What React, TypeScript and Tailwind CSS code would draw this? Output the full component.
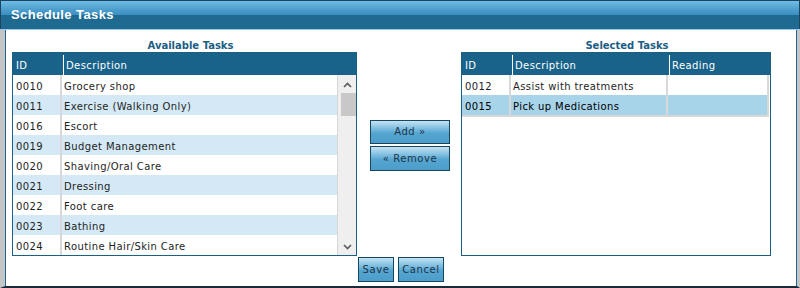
import React from 'react';

const available = [
  { id: '0010', desc: 'Grocery shop' },
  { id: '0011', desc: 'Exercise (Walking Only)' },
  { id: '0016', desc: 'Escort' },
  { id: '0019', desc: 'Budget Management' },
  { id: '0020', desc: 'Shaving/Oral Care' },
  { id: '0021', desc: 'Dressing' },
  { id: '0022', desc: 'Foot care' },
  { id: '0023', desc: 'Bathing' },
  { id: '0024', desc: 'Routine Hair/Skin Care' },
];

const selected = [
  { id: '0012', desc: 'Assist with treatments', reading: '', active: false },
  { id: '0015', desc: 'Pick up Medications', reading: '', active: true },
];

const Chevron: React.FC<{ up?: boolean }> = ({ up }) => (
  <svg width="9" height="6" viewBox="0 0 9 6" className="block">
    <path
      d={up ? 'M1 5 L4.5 1.5 L8 5' : 'M1 1 L4.5 4.5 L8 1'}
      fill="none"
      stroke="#5a5a5a"
      strokeWidth="1.6"
    />
  </svg>
);

const Btn: React.FC<{ label: string; className?: string }> = ({ label, className }) => (
  <button
    className={
      'border border-[#17465f] bg-[linear-gradient(to_bottom,#c4e3f4_0%,#7dbde0_35%,#55a5d1_55%,#4c9dca_100%)] text-[10px] tracking-[0.6px] text-[#1c3446] leading-none ' +
      (className ?? '')
    }
  >
    {label}
  </button>
);

export default function App() {
  return (
    <div className="w-[800px] h-[288px] bg-white flex flex-col font-['DejaVu_Sans',sans-serif] text-[10px] text-[#1e1e1e] tracking-[0.4px]">
      {/* Title bar */}
      <div className="h-[29px] border-x border-t border-[#1b4560] bg-[linear-gradient(to_bottom,#6fbde5_0px,#4a9ccb_9px,#3c8ec0_14px,#1f6a90_14px,#1f6a90_100%)] flex items-center pl-[10px]">
        <span className="font-['Liberation_Sans',sans-serif] font-bold text-[13px] text-white tracking-[0.4px]">
          Schedule Tasks
        </span>
      </div>
      <div className="h-px bg-[#9ccaea]" />

      {/* Body */}
      <div className="flex-1 flex border-l-[5px] border-r-[3px] border-[#c5c5c5] border-b-2 border-b-[#1a2a38]">
        <div className="flex-1 flex flex-col border-x border-[#21668e]">
          <div className="flex pl-[6px] pt-[9px]">
            {/* Available */}
            <div className="w-[345px] flex flex-col">
              <div className="h-[13px] leading-[13px] pl-[12px] text-center font-bold text-[#1a5e85] tracking-normal">
                Available Tasks
              </div>
              <div className="h-[204px] border border-[#1d5f82] flex flex-col">
                <div className="h-[22px] bg-[#19628a] flex text-white">
                  <div className="w-[50px] pl-[3px] leading-[26px]">ID</div>
                  <div className="w-px bg-white mt-[2px]" />
                  <div className="flex-1 pl-[2px] leading-[26px]">Description</div>
                </div>
                <div className="flex-1 flex">
                  <div className="w-[324px] flex flex-col">
                    {available.map((t, i) => (
                      <div
                        key={t.id}
                        className={'h-[20px] flex ' + (i % 2 === 1 ? 'bg-[#d4e9f5]' : 'bg-white')}
                      >
                        <div className="w-[49px] pl-[3px] leading-[24px] border-r-2 border-[#d8d8d8]">{t.id}</div>
                        <div className="flex-1 pl-[2px] leading-[24px]">{t.desc}</div>
                      </div>
                    ))}
                  </div>
                  <div className="flex-1 border-l border-[#d6d6d6] bg-[#efefef] flex flex-col items-center">
                    <div className="pt-[7px] pb-[5px]">
                      <Chevron up />
                    </div>
                    <div className="w-[15px] ml-[2px] h-[23px] bg-[#c8c8c8]" />
                    <div className="flex-1" />
                    <div className="pb-[5px]">
                      <Chevron />
                    </div>
                  </div>
                </div>
              </div>
            </div>

            {/* Middle buttons */}
            <div className="ml-[13px] w-[80px] pt-[81px] flex flex-col gap-[2px]">
              <Btn label="Add »" className="h-[24px] w-[80px]" />
              <Btn label="« Remove" className="h-[25px] w-[80px]" />
            </div>

            {/* Selected */}
            <div className="ml-[11px] w-[310px] flex flex-col">
              <div className="h-[13px] leading-[13px] pl-[22px] text-center font-bold text-[#1a5e85] tracking-normal">
                Selected Tasks
              </div>
              <div className="h-[204px] border border-[#1d5f82] flex flex-col">
                <div className="h-[22px] bg-[#19628a] flex text-white">
                  <div className="w-[50px] pl-[3px] leading-[26px]">ID</div>
                  <div className="w-px bg-white mt-[2px]" />
                  <div className="w-[156px] pl-[2px] leading-[26px]">Description</div>
                  <div className="w-px bg-white mt-[2px]" />
                  <div className="flex-1 pl-[2px] leading-[26px]">Reading</div>
                </div>
                <div className="flex flex-col border-b-2 border-[#d8d8d8] mr-px">
                  {selected.map((t) => (
                    <div
                      key={t.id}
                      className={'h-[20px] flex ' + (t.active ? 'bg-[#a8d4ea] text-black' : 'bg-white')}
                    >
                      <div className="w-[49px] pl-[3px] leading-[24px] border-r-2 border-[#d8d8d8]">{t.id}</div>
                      <div className="w-[157px] pl-[2px] leading-[24px] border-r-2 border-[#d8d8d8]">{t.desc}</div>
                      <div className="flex-1 pl-[2px] leading-[24px] border-r-2 border-[#d8d8d8]">{t.reading}</div>
                    </div>
                  ))}
                </div>
              </div>
            </div>
          </div>

          {/* Save / Cancel */}
          <div className="flex justify-center gap-[4px] mt-px">
            <Btn label="Save" className="h-[25px] w-[36px]" />
            <Btn label="Cancel" className="h-[25px] w-[46px]" />
          </div>
        </div>
      </div>
    </div>
  );
}
